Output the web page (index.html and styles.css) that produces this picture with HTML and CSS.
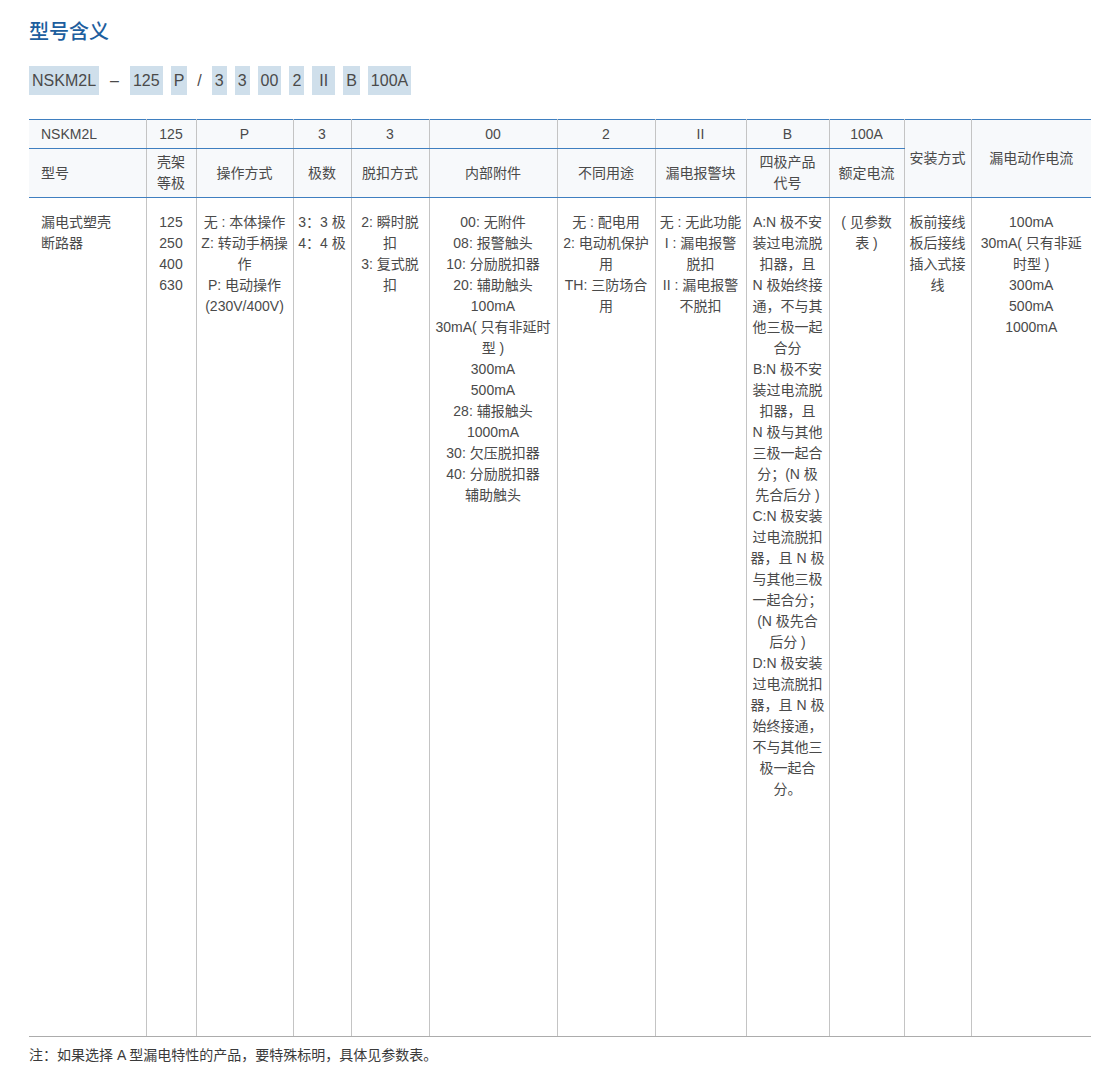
FILE: index.html
```html
<!DOCTYPE html>
<html lang="zh-CN">
<head>
<meta charset="utf-8">
<title>型号含义</title>
<link rel="stylesheet" href="styles.css">
</head>
<body>
<main class="page">
  <h1 class="title">型号含义</h1>
  <div class="code">
    <span class="chip">NSKM2L</span>
    <span class="sep dash">–</span>
    <span class="chip">125</span>
    <span class="chip">P</span>
    <span class="sep slash">/</span>
    <span class="chip">3</span>
    <span class="chip">3</span>
    <span class="chip">00</span>
    <span class="chip">2</span>
    <span class="chip chip-wide">II</span>
    <span class="chip">B</span>
    <span class="chip">100A</span>
  </div>
  <table class="spec">
    <colgroup>
      <col class="w117"><col class="w50"><col class="w97"><col class="w58"><col class="w78"><col class="w128">
      <col class="w98"><col class="w91"><col class="w83"><col class="w75"><col class="w67"><col class="w120">
    </colgroup>
    <thead>
      <tr class="row-code">
        <th class="left">NSKM2L</th>
        <th>125</th>
        <th>P</th>
        <th>3</th>
        <th>3</th>
        <th>00</th>
        <th>2</th>
        <th>II</th>
        <th>B</th>
        <th>100A</th>
        <th rowspan="2" class="span2">安装方式</th>
        <th rowspan="2" class="span2">漏电动作电流</th>
      </tr>
      <tr class="row-name">
        <th class="left">型号</th>
        <th>壳架<br>等极</th>
        <th>操作方式</th>
        <th>极数</th>
        <th>脱扣方式</th>
        <th>内部附件</th>
        <th>不同用途</th>
        <th>漏电报警块</th>
        <th>四极产品<br>代号</th>
        <th>额定电流</th>
      </tr>
    </thead>
    <tbody>
      <tr class="row-body">
        <td class="left">漏电式塑壳<br>断路器</td>
        <td>125<br>250<br>400<br>630</td>
        <td>无 : 本体操作<br>Z: 转动手柄操<br>作<br>P: 电动操作<br>(230V/400V)</td>
        <td>3：3 极<br>4：4 极</td>
        <td>2: 瞬时脱<br>扣<br>3: 复式脱<br>扣</td>
        <td>00: 无附件<br>08: 报警触头<br>10: 分励脱扣器<br>20: 辅助触头<br>100mA<br>30mA( 只有非延时<br>型 )<br>300mA<br>500mA<br>28: 辅报触头<br>1000mA<br>30: 欠压脱扣器<br>40: 分励脱扣器<br>辅助触头</td>
        <td>无 : 配电用<br>2: 电动机保护<br>用<br>TH: 三防场合<br>用</td>
        <td>无 : 无此功能<br>I : 漏电报警<br>脱扣<br>II : 漏电报警<br>不脱扣</td>
        <td>A:N 极不安<br>装过电流脱<br>扣器，且<br>N 极始终接<br>通，不与其<br>他三极一起<br>合分<br>B:N 极不安<br>装过电流脱<br>扣器，且<br>N 极与其他<br>三极一起合<br>分；(N 极<br>先合后分 )<br>C:N 极安装<br>过电流脱扣<br>器，且 N 极<br>与其他三极<br>一起合分；<br>(N 极先合<br>后分 )<br>D:N 极安装<br>过电流脱扣<br>器，且 N 极<br>始终接通，<br>不与其他三<br>极一起合<br>分。</td>
        <td>( 见参数<br>表 )</td>
        <td>板前接线<br>板后接线<br>插入式接<br>线</td>
        <td>100mA<br>30mA( 只有非延<br>时型 )<br>300mA<br>500mA<br>1000mA</td>
      </tr>
    </tbody>
  </table>
  <p class="note">注：如果选择 A 型漏电特性的产品，要特殊标明，具体见参数表。</p>
</main>
</body>
</html>
```

FILE: styles.css
```css
html, body {
  margin: 0;
  padding: 0;
  background: #ffffff;
}

body {
  font-family: "Liberation Sans", "Noto Sans CJK SC", sans-serif;
  color: #4a4a4a;
  font-size: 14px;
}

.page {
  padding: 19px 24px 0 29px;
}

.title {
  margin: 0;
  font-size: 20px;
  line-height: 26px;
  font-weight: 500;
  color: #1d5e9e;
}

.code {
  display: flex;
  align-items: center;
  gap: 8px;
  margin-top: 21px;
  height: 29px;
  font-size: 16px;
  color: #4a4a4a;
}

.chip {
  display: flex;
  align-items: center;
  height: 29px;
  padding: 0 3px;
  background: #cfdfeb;
}

.chip-wide {
  padding: 0 7px;
}

.sep {
  padding: 0 3px;
}

.slash {
  padding: 0 2px;
}

.spec {
  margin-top: 24px;
  width: 1062px;
  table-layout: fixed;
  border-collapse: collapse;
  font-size: 14px;
  line-height: 21px;
  color: #4a4a4a;
}

.w117 { width: 117px; }
.w50 { width: 50px; }
.w97 { width: 97px; }
.w58 { width: 58px; }
.w78 { width: 78px; }
.w128 { width: 128px; }
.w98 { width: 98px; }
.w91 { width: 91px; }
.w83 { width: 83px; }
.w75 { width: 75px; }
.w67 { width: 67px; }
.w120 { width: 120px; }

.spec th,
.spec td {
  padding: 0 2px;
  text-align: center;
  border-left: 1px solid #c4c4c4;
  border-right: 1px solid #c4c4c4;
  white-space: nowrap;
}

.spec th:first-child,
.spec td:first-child {
  border-left: none;
}

.spec th:last-child,
.spec td:last-child {
  border-right: none;
}

.spec th {
  font-weight: normal;
  background: #f7f9fb;
}

.spec .left {
  text-align: left;
  padding-left: 12px;
}

.row-code th {
  height: 28px;
  border-top: 1px solid #3f7fc0;
  border-bottom: 1px solid #3f7fc0;
}

.row-name th {
  height: 48px;
  border-bottom: 1px solid #3f7fc0;
}

.span2 {
  border-top: 1px solid #3f7fc0;
  border-bottom: 1px solid #3f7fc0;
}

.row-body td {
  height: 824px;
  vertical-align: top;
  padding-top: 14px;
  border-bottom: 1px solid #acacac;
}

.note {
  margin: 8px 0 0;
  font-size: 14px;
  line-height: 21px;
  color: #3a3a3a;
}
```
